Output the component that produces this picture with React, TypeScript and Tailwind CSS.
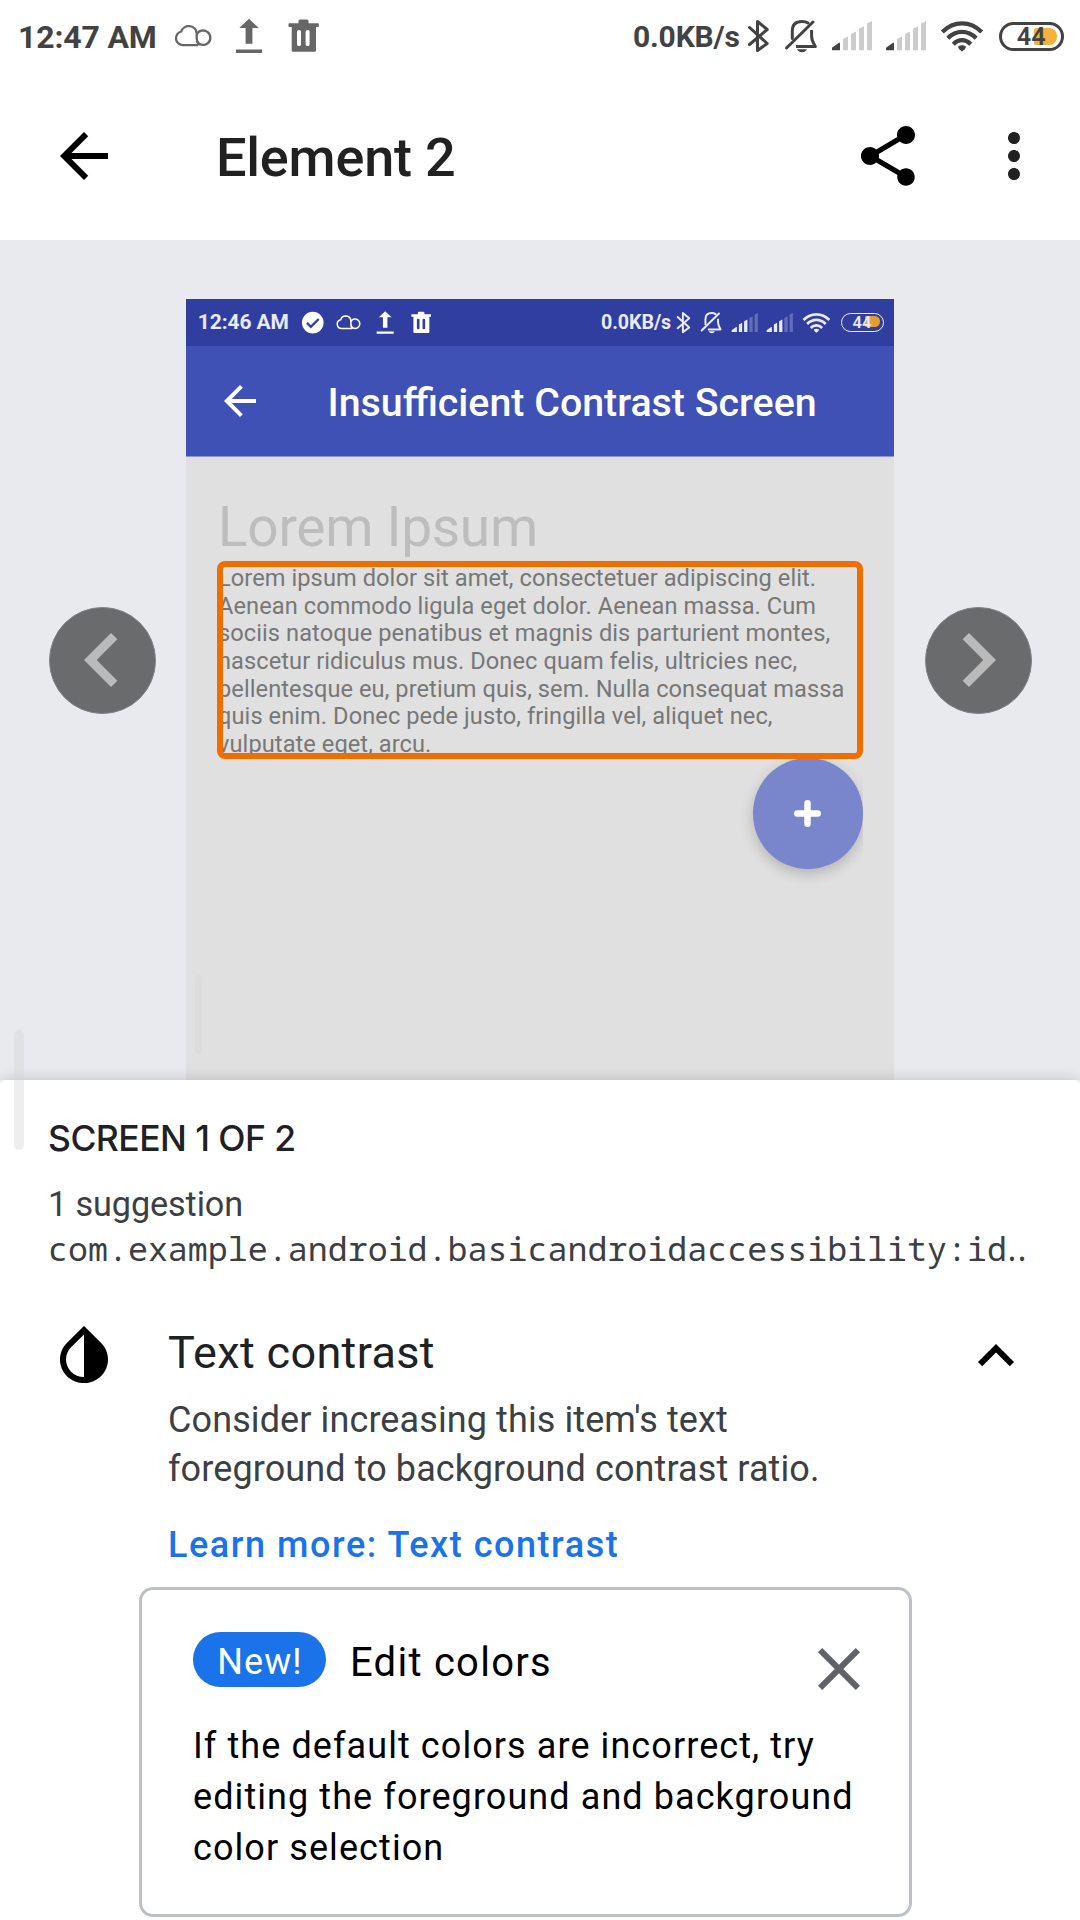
import type { ReactNode } from 'react';
import { MdArrowBack, MdShare, MdMoreVert, MdInvertColors, MdExpandLess, MdClose, MdChevronLeft, MdChevronRight } from 'react-icons/md';

/* Every status glyph shares the 72px bar height; x is the glyph's left edge in bar units. */
function Glyph({ x, w, className = '', children }: { x: number; w: number; className?: string; children: ReactNode }) {
  return (
    <svg viewBox={`${x} 0 ${w} 72`} width={w} height={72} className={`shrink-0 ${className}`} fill="currentColor">
      {children}
    </svg>
  );
}

function Signal({ active }: { active: number }) {
  const bars = [
    'M832 50.2v-2.5l7-5q1-.4 1 .8v6.700z',
    'M843 50.2V39l5-2.6v13.800z',
    'M851 50.2V34l5-2.6v18.800z',
    'M859 50.2V28.800l5-2.6v24z',
    'M867 50.2V23.600l5-2.6v29.200z',
  ];
  return (
    <Glyph x={831} w={42}>
      {bars.map((d, i) => (
        <path key={d} d={d} opacity={i < active ? 1 : 0.27} />
      ))}
    </Glyph>
  );
}

function StatusBar({ time, dark = false }: { time: string; dark?: boolean }) {
  return (
    <div className={`flex h-[72px] w-[1080px] shrink-0 items-center justify-between pr-[16px] pl-[18px] ${dark ? 'text-[#e9eafc]' : 'text-[#424242]'}`}>
      <div className="flex items-center">
        <span className="w-[139px] pt-[1px] text-[32px] leading-[72px] font-bold tracking-[-0.150px] whitespace-nowrap">{time}</span>
        <div className={`flex items-center ${dark ? 'text-white' : 'text-[#666666]'}`}>
          {dark && (
            <Glyph x={0} w={36} className="mr-[1px] ml-[18px]">
              <circle cx="18" cy="36" r="16.5" />
              <path d="M9 36.500l6 6 12-12" fill="none" stroke="#303f9f" strokeWidth="3.6" />
            </Glyph>
          )}
          <Glyph x={174} w={38} className="ml-[17px]">
            <g fill="none" stroke="currentColor" strokeWidth="2.3">
              <path d="M198.500 45.100H183a6.900 6.900 0 0 1-1.800-13.600 8 8 0 0 1 15.500 1.500v4.700c0 3 1.200 5.600 3.600 7" />
              <path d="M196.700 34.500a7.200 7.200 0 1 1 0 6.400" />
            </g>
          </Glyph>
          <Glyph x={235} w={28} className="ml-[23px]">
            <path d="M249 18.800l9.700 9.200h-6.300v15.700h-6.800V28h-6.300zM236 49.600h26v3.500h-26z" />
          </Glyph>
          <Glyph x={288} w={31} className="ml-[25px]">
            <path
              fillRule="evenodd"
              d="M298.500 21q0-1.500 1.500-1.500h7q1.500 0 1.500 1.500v2.200h9.500q.8 0 .8.800v2.200q0 .8-.8.800h-2V50.500q0 1.300-1.300 1.300h-21.700q-1.300 0-1.300-1.300V27h-2.400q-.8 0-.8-.8V24q0-.8.8-.8h9.200zM297 31.500v13q0 1.500 2 1.500t2-1.500v-13q0-1.500-2-1.500t-2 1.500zM305.600 31.500v13q0 1.500 2 1.500t2-1.500v-13q0-1.500-2-1.500t-2 1.500z"
            />
          </Glyph>
        </div>
      </div>
      <div className="flex items-center">
        <span className="w-[108px] pt-[1px] text-[30px] leading-[72px] font-bold tracking-[-0.150px] whitespace-nowrap">0.0KB/s</span>
        <Glyph x={747} w={24} className="ml-[6px]">
          <path d="M749.500 27.500L767.200 43.500 757.500 50.500V21.500L767.200 29.500 749.500 44.500" fill="none" stroke="currentColor" strokeWidth="3" strokeLinejoin="round" strokeLinecap="round" />
        </Glyph>
        <Glyph x={784} w={34} className="ml-[13px]">
          <g fill="none" stroke="currentColor" strokeWidth="3" strokeLinecap="round">
            <path d="M792.300 38.500V31q0-9.600 9.700-9.600 3.600 0 6 1.600" />
            <path d="M786.500 48L813 22" />
            <path d="M811.600 30V36q0 4.500 3.800 10.500H796" strokeLinecap="butt" strokeLinejoin="round" />
          </g>
          <path d="M797 49.300h10q-1.500 2.900-5 2.900t-5-2.900z" />
        </Glyph>
        <div className="ml-[13px] flex gap-[12px]">
          <Signal active={dark ? 3 : 1} />
          <Signal active={dark ? 3 : 1} />
        </div>
        <Glyph x={940} w={44} className="ml-[13px]">
          <g fill="none" stroke="currentColor" strokeWidth="4.200">
            <path d="M942.300 32q8.500-8.700 19.700-8.700t19.700 8.700" />
            <path d="M947.800 38.200q6.200-6.300 14.200-6.300t14.200 6.300" />
            <path d="M953.300 44.200q3.900-4 8.700-4t8.700 4" />
          </g>
          <path d="M958.300 46.300q3.700-2.200 7.400 0 .5 1.500-1 2.900L962 51.400l-2.700-2.200q-1.500-1.400-1-2.900z" />
        </Glyph>
        <div className="relative ml-[15px] flex h-[29px] w-[65px] items-center justify-center rounded-full border-[3px] border-current">
          <span className={`absolute top-[3px] right-[4.500px] h-[17px] w-[23px] rounded-r-[8px] rounded-l-[2px] ${dark ? 'bg-[#e39d31]' : 'bg-[#f7b039]'}`} />
          <span className="relative scale-x-95 pt-[1px] text-[26.500px] leading-none font-semibold">44</span>
        </div>
      </div>
    </div>
  );
}

const paragraph = [
  'Lorem ipsum dolor sit amet, consectetuer adipiscing elit.',
  'Aenean commodo ligula eget dolor. Aenean massa. Cum',
  'sociis natoque penatibus et magnis dis parturient montes,',
  'nascetur ridiculus mus. Donec quam felis, ultricies nec,',
  'pellentesque eu, pretium quis, sem. Nulla consequat massa',
  'quis enim. Donec pede justo, fringilla vel, aliquet nec,',
  'vulputate eget, arcu.',
];

function Preview() {
  return (
    <div className="relative h-[781px] w-[708px] overflow-hidden bg-[#e0e0e0]">
      <div className="h-[47px] bg-[#303f9f]">
        <div className="[zoom:0.6556]">
          <StatusBar time="12:46 AM" dark />
        </div>
      </div>
      <div className="flex h-[111px] items-center border-b border-[#8d98d2] bg-[#3f51b5] pb-px pl-[30px] text-white">
        <MdArrowBack className="size-[48px]" />
        <h2 className="ml-[63.500px] pt-[6px] text-[39.330px] leading-none font-medium whitespace-nowrap">Insufficient Contrast Screen</h2>
      </div>
      <h3 className="mt-[38px] ml-[32px] text-[55px] leading-[64px] tracking-[-0.280px] text-[#bdbdbd]">Lorem Ipsum</h3>
      <div className="relative mt-[2px] ml-[31px] h-[198px] w-[646px]">
        <p className="h-full overflow-hidden pt-[4px] pl-px text-[23.600px] leading-[27.660px] tracking-[0.080px] whitespace-nowrap text-[#777777]">
          {paragraph.map((line) => (
            <span key={line} className="block">
              {line}
            </span>
          ))}
        </p>
        <div className="absolute inset-0 rounded-[8px] border-[6px] border-[#ee6e02]" />
      </div>
      <div className="flex h-[140px] w-[677px] justify-end overflow-hidden">
        <button className="-mt-px flex size-[110.500px] items-center justify-center rounded-full bg-[#7986cb] shadow-[0_5px_14px_rgba(0,0,0,0.2)]">
          <svg viewBox="0 0 27 27" className="mt-px size-[27px]" stroke="white" strokeWidth="6.500" strokeLinecap="round">
            <path d="M13.500 3.300v20.400M3.300 13.500h20.400" />
          </svg>
        </button>
      </div>
      <span className="absolute top-[676px] left-[9px] h-[79px] w-[7px] rounded-full bg-[#dcdcdc]" />
    </div>
  );
}

function NavButton({ children }: { children: ReactNode }) {
  return (
    <button className="mt-[366.500px] flex size-[107px] items-center justify-center rounded-full border border-[#7f8184] bg-[#696b6d] text-[#bababa]">
      {children}
    </button>
  );
}

export default function App() {
  return (
    <div className="relative flex h-[1920px] w-[1080px] flex-col overflow-hidden bg-white font-[Roboto,sans-serif]">
      <StatusBar time="12:47 AM" />

      <header className="flex h-[168px] shrink-0 items-center pr-[30px] pl-[48px] text-black">
        <MdArrowBack className="size-[72px]" />
        <h1 className="ml-[96px] flex-1 pt-[4px] text-[54px] leading-none font-medium tracking-[-0.200px] text-[#212121]">Element 2</h1>
        <MdShare className="size-[72px]" />
        <MdMoreVert className="ml-[54px] size-[72px] text-[#212121]" />
      </header>

      <main className="flex h-[840px] shrink-0 items-start justify-between bg-[#e8eaed] px-[48.500px]">
        <NavButton>
          <MdChevronLeft className="size-[108px] shrink-0" />
        </NavButton>
        <div className="mt-[59px]">
          <Preview />
        </div>
        <NavButton>
          <MdChevronRight className="size-[108px] shrink-0" />
        </NavButton>
      </main>

      <section className="relative flex-1 rounded-t-[6px] bg-white pt-[37px] shadow-[0_-1px_14px_rgba(0,0,0,0.16)]">
        <div className="px-[48px]">
          <p className="font-[Inter,sans-serif] text-[35.500px] leading-[44px] font-medium tracking-[-0.550px] text-[#202124]">SCREEN 1 OF 2</p>
          <p className="mt-[21px] text-[34.200px] leading-[44px] tracking-[-0.100px] text-[#3c4043]">1 suggestion</p>
          <p className="font-['Noto_Sans_Mono','DejaVu_Sans_Mono',monospace] text-[33.300px] leading-[44px] whitespace-nowrap text-[#3c4043]">
            com.example.android.basicandroidaccessibility:id‥
          </p>
        </div>

        <div className="mt-[50px] flex items-start pr-[48px] pl-[48px] text-black">
          <MdInvertColors className="size-[72px] shrink-0" />
          <div className="ml-[48px] flex-1 pt-[7px]">
            <h2 className="text-[45px] leading-[52px] tracking-[0.350px] text-[#202124]">Text contrast</h2>
            <p className="mt-[17px] text-[36px] leading-[48.500px] tracking-[0.100px] whitespace-nowrap text-[#3c4043]">
              Consider increasing this item's text
              <br />
              foreground to background contrast ratio.
            </p>
            <a className="mt-[30px] block text-[36px] leading-[44px] font-medium tracking-[1.540px] text-[#1a73e8]">Learn more: Text contrast</a>
          </div>
          <MdExpandLess className="size-[72px] shrink-0" />
        </div>

        <div className="mt-[20px] ml-[139px] h-[330px] w-[773px] rounded-[14px] border-[3px] border-[#bdc1c6] pt-[42px] pr-[34px] pl-[51px] text-black">
          <div className="flex items-start">
            <span className="flex h-[55px] w-[133px] items-center justify-center rounded-full bg-[#1a73e8] pt-[4px] pl-px text-[36px] leading-none tracking-[1.100px] text-white">New!</span>
            <h3 className="ml-[24px] flex-1 pt-[3px] text-[40px] leading-[55px] tracking-[1.250px]">Edit colors</h3>
            <MdClose className="mt-px size-[72px] text-[#5f6368]" />
          </div>
          <p className="mt-[15.500px] text-[36px] leading-[51px] tracking-[1.080px] whitespace-nowrap">
            If the default colors are incorrect, try
            <br />
            editing the foreground and background
            <br />
            color selection
          </p>
        </div>
      </section>

      <span className="absolute top-[1030px] left-[14px] h-[120px] w-[10px] rounded-full bg-[#d4d4d4]/40" />
    </div>
  );
}
